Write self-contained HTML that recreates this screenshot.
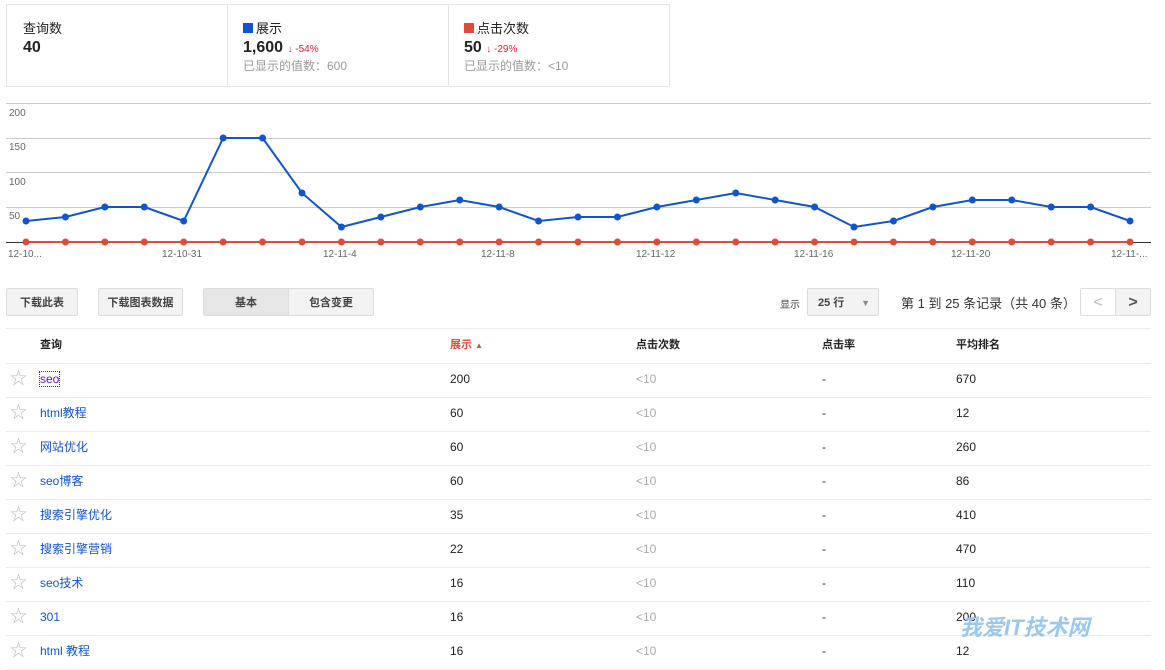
<!DOCTYPE html>
<html><head><meta charset="utf-8"><style>
body{margin:0;width:1165px;height:660px;overflow:hidden;background:#fff;font-family:"Liberation Sans","Noto Sans CJK SC",sans-serif;color:#222;position:relative}
.card{position:absolute;top:4px;height:83px;border:1px solid #e5e5e5;box-sizing:border-box}
.t{font-size:13px;position:absolute;left:16px;top:15px;line-height:18px}
.big{font-size:16px;font-weight:bold;position:absolute;left:16px;top:33px;line-height:20px}
.big small{font-size:10px;color:#d23;font-weight:normal}
.sub{position:absolute;left:16px;top:52px;font-size:12px;color:#999;line-height:18px}
.sq{display:inline-block;width:10px;height:10px;margin-right:3px;vertical-align:0px}
.btn{position:absolute;top:288px;height:28px;border:1px solid #ddd;background:#f3f3f3;font-size:11px;font-weight:bold;color:#444;text-align:center;line-height:28px;box-sizing:border-box;border-radius:2px}
.row{position:absolute;left:6px;width:1145px;height:34px;border-bottom:1px solid #ebebeb;font-size:12px}
.row span{position:absolute;top:0;line-height:32px;height:32px}
.q{left:34px;color:#15c}
.st{left:4px;color:#bbb;font-size:17px}
.c2{left:444px}.c3{left:630px;color:#aaa}.c4{left:816px}.c5{left:950px}
</style></head><body>
<div class="card" style="left:6px;width:222px"><div class="t">查询数</div><div class="big">40</div></div>
<div class="card" style="left:227px;width:222px;border-left:none"><div class="t"><span class="sq" style="background:#1155cc"></span>展示</div><div class="big">1,600 <small><b style="color:#d23">↓</b> -54%</small></div><div class="sub">已显示的值数：600</div></div>
<div class="card" style="left:448px;width:222px;border-left:none"><div class="t"><span class="sq" style="background:#dd4b39"></span>点击次数</div><div class="big">50 <small><b>↓</b> -29%</small></div><div class="sub">已显示的值数：&lt;10</div></div>
<svg style="position:absolute;left:0;top:0" width="1165" height="270">
<g stroke="#ccc" stroke-width="1"><line x1="6" y1="103.5" x2="1151" y2="103.5"/><line x1="6" y1="138.5" x2="1151" y2="138.5"/><line x1="6" y1="172.5" x2="1151" y2="172.5"/><line x1="6" y1="207.5" x2="1151" y2="207.5"/></g>
<line x1="6" y1="242.5" x2="1151" y2="242.5" stroke="#333"/>
<g font-size="10" fill="#666" font-family="Liberation Sans"><text x="9" y="116">200</text><text x="9" y="150">150</text><text x="9" y="185">100</text><text x="9" y="219">50</text>
<text x="8" y="257">12-10...</text><text x="162" y="257">12-10-31</text><text x="323" y="257">12-11-4</text><text x="481" y="257">12-11-8</text><text x="636" y="257">12-11-12</text><text x="794" y="257">12-11-16</text><text x="951" y="257">12-11-20</text><text x="1111" y="257">12-11-...</text></g>
<line x1="26" y1="242" x2="1130" y2="242" stroke="#dd4b39" stroke-width="2"/>
<g fill="#dd4b39" id="r"></g>
<polyline fill="none" stroke="#1155cc" stroke-width="2" id="bl"/>
<g fill="#1155cc" id="b"></g>
</svg>
<div class="btn" style="left:6px;width:72px">下载此表</div>
<div class="btn" style="left:98px;width:85px">下载图表数据</div>
<div class="btn" style="left:203px;width:86px;background:#e6e6e6;border-radius:2px 0 0 2px">基本</div>
<div class="btn" style="left:288px;width:86px">包含变更</div>
<div style="position:absolute;left:780px;top:296px;font-size:10px;color:#444">显示</div>
<div class="btn" style="left:807px;width:72px;text-align:left;padding-left:10px">25 行 <span style="position:absolute;right:8px;color:#888;font-size:9px">▼</span></div>
<div style="position:absolute;left:901px;top:293px;font-size:13px;color:#333">第 1 到 25 条记录（共 40 条）</div>
<div class="btn" style="left:1080px;width:36px;background:#fff;color:#bbb;font-size:16px;font-weight:normal">&lt;</div>
<div class="btn" style="left:1115px;width:36px;color:#555;font-size:16px">&gt;</div>
<div class="row" style="top:328px;border-top:1px solid #ebebeb;font-weight:bold;font-size:11px"><span style="left:34px">查询</span><span class="c2" style="color:#dd4b39">展示 <small style="font-size:8px">▲</small></span><span style="left:630px">点击次数</span><span class="c4">点击率</span><span class="c5">平均排名</span></div>
<div id="rows"></div>
<div style="position:absolute;left:960px;top:610px;font-size:22px;font-weight:bold;color:#9cc8ee;font-style:italic">我爱IT技术网</div>
<script>
var ys=[221,217,207,207,221,138,138,193,227,217,207,200,207,221,217,217,207,200,193,200,207,227,221,207,200,200,207,207,221],p=[],b='',r='';
ys.forEach(function(y,i){var x=26+i*39.43;p.push(x+','+y);b+='<circle cx="'+x+'" cy="'+y+'" r="3.5"/>';r+='<circle cx="'+x+'" cy="242" r="3.5"/>';});
document.getElementById('bl').setAttribute('points',p.join(' '));
document.getElementById('b').innerHTML=b;document.getElementById('r').innerHTML=r;
var d=[['seo',200,670],['html教程',60,12],['网站优化',60,260],['seo博客',60,86],['搜索引擎优化',35,410],['搜索引擎营销',22,470],['seo技术',16,110],['301',16,200],['html 教程',16,12]],h='';
d.forEach(function(e,i){var t=363+i*34;h+='<div class="row" style="top:'+t+'px"><span class="st">☆</span><span class="q"'+(i==0?' style="color:#61c;"':'')+'>'+(i==0?'<i style="font-style:normal;outline:1px dotted #61c">seo</i>':e[0])+'</span><span class="c2">'+e[1]+'</span><span class="c3">&lt;10</span><span class="c4">-</span><span class="c5">'+e[2]+'</span></div>';});
document.getElementById('rows').innerHTML=h;
</script>
</body></html>
